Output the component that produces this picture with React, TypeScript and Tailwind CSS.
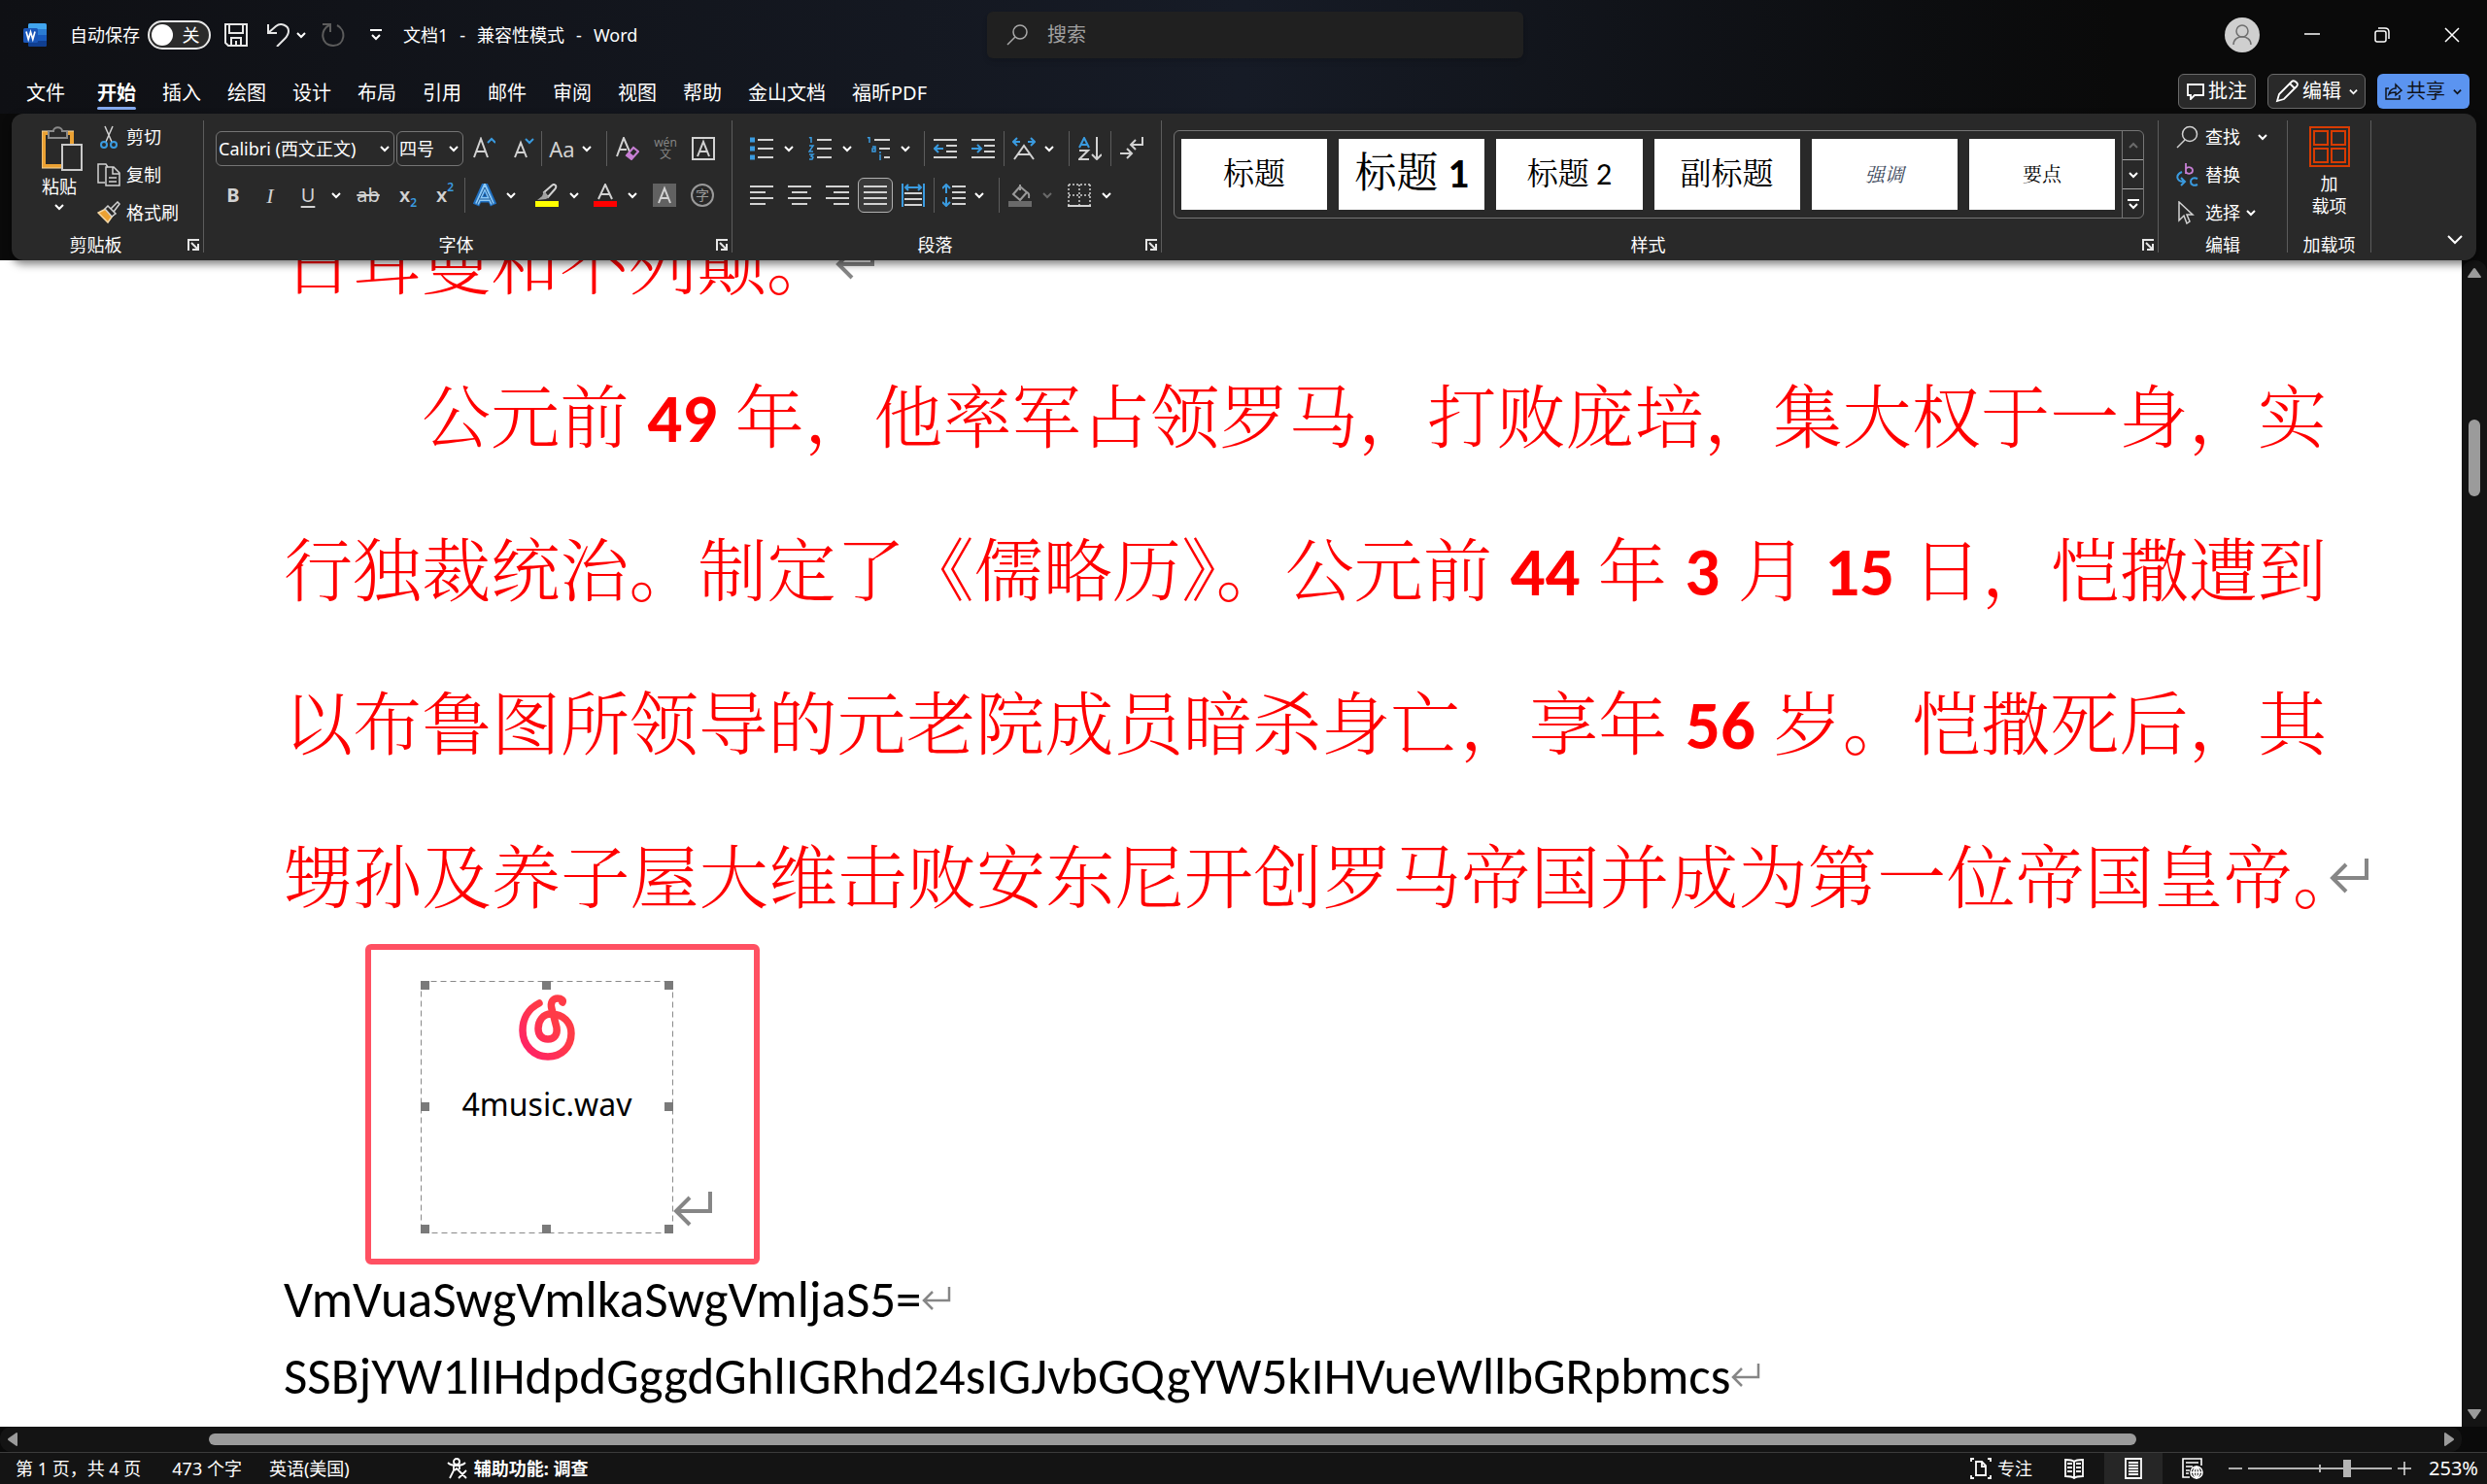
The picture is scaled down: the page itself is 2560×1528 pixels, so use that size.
import React from "react";

type Kids = { children?: React.ReactNode };

const UI = "font-['Noto_Sans','Noto_Sans_CJK_SC',sans-serif]";

function Chevron({ size = 10, className = "" }: { size?: number; className?: string }) {
  return (
    <svg width={size} height={size} viewBox="0 0 10 10" className={"shrink-0 " + className} fill="none" stroke="currentColor" strokeWidth="2">
      <path d="M1 3 L5 7 L9 3" />
    </svg>
  );
}

function Svg({ w = 24, h = 24, children }: Kids & { w?: number; h?: number }) {
  return (
    <svg width={w} height={h} viewBox={`0 0 ${w} ${h}`} fill="none" stroke="#d2d2d2" strokeWidth="2" className="shrink-0">
      {children}
    </svg>
  );
}

function Cell({ w, label, children }: Kids & { w: string; label: string }) {
  return (
    <button type="button" aria-label={label} className={"flex h-9 shrink-0 items-center justify-center " + w}>
      {children}
    </button>
  );
}

function Sep() {
  return <span className="h-9 w-px shrink-0 bg-[#5c5c5c]" />;
}

function Launcher() {
  return (
    <svg width="12" height="12" viewBox="0 0 12 12" fill="none" stroke="#e6e6e6" strokeWidth="2" className="shrink-0">
      <path d="M1 12 V1 H12" />
      <path d="M4 4 L10 10 M11 5 V11 H5" />
    </svg>
  );
}

function Group({ label, className = "", launcher = true, children }: Kids & { label: string; className?: string; launcher?: boolean }) {
  return (
    <section aria-label={label} className={"flex h-[136px] flex-col border-r border-[#5c5c5c] " + className}>
      <div className="h-[118px] shrink-0">{children}</div>
      <div className="flex h-5 shrink-0 items-center text-lg leading-5">
        <span className="flex-1 text-center">{label}</span>
        {launcher && (
          <button type="button" aria-label={label + "设置"} className="ml-2 mr-1">
            <Launcher />
          </button>
        )}
      </div>
    </section>
  );
}

function ReturnMark({ big = false }: { big?: boolean }) {
  return big ? (
    <svg width="40" height="36" viewBox="0 0 40 36" fill="none" stroke="#868686" strokeWidth="4" className="inline-block shrink-0">
      <path d="M38 0 V20 H3 M17 6 L3 20 L17 34" />
    </svg>
  ) : (
    <svg width="30" height="26" viewBox="0 0 30 26" fill="none" stroke="#868686" strokeWidth="2.500" className="-mt-1 inline-block shrink-0">
      <path d="M28 1 V15 H2 M11 6 L2 15 L11 24" />
    </svg>
  );
}

function WordLogo() {
  return (
    <svg width="24" height="24" viewBox="0 0 24 24" className="shrink-0">
      <rect x="5" y="0" width="19" height="24" rx="2" fill="#185abd" />
      <path d="M5 6 V2 Q5 0 7 0 H22 Q24 0 24 2 V6 Z" fill="#41a5ee" />
      <rect x="5" y="6" width="19" height="6" fill="#2b7cd3" />
      <path d="M5 18 H24 V22 Q24 24 22 24 H7 Q5 24 5 22 Z" fill="#103f91" />
      <rect x="0" y="5" width="15" height="15" rx="1.5" fill="#1a56b8" />
      <path d="M3 8.500 L5.200 16.500 L7.500 9 L9.800 16.500 L12 8.500" fill="none" stroke="#fff" strokeWidth="1.700" />
    </svg>
  );
}

function TitleBar() {
  return (
    <div className="flex h-[72px] items-center text-lg">
      <div className="flex flex-1 items-center pl-6">
        <WordLogo />
        <label className="ml-6 flex items-center">
          <span>自动保存</span>
          <input type="checkbox" className="sr-only" />
          <span className="ml-2 flex h-[30px] w-[65px] items-center rounded-full border-2 border-[#e8e8e8] bg-[#2b2b2b] pl-0.5">
            <span className="size-[22px] rounded-full bg-white" />
            <span className="flex-1 text-center leading-none">关</span>
          </span>
        </label>
        <button type="button" aria-label="保存" className="ml-3.5">
          <svg width="24" height="24" viewBox="0 0 24 24" fill="none" stroke="#e6e6e6" strokeWidth="2">
            <path d="M1 1 H23 V23 H4 L1 20 Z M5 1 V10 H19 V1 M7 23 V15 H17 V23 M12 18 V22" />
          </svg>
        </button>
        <button type="button" aria-label="撤消" className="ml-5">
          <svg width="24" height="24" viewBox="0 0 24 24" fill="none" stroke="#e6e6e6" strokeWidth="2">
            <path d="M1 1 V10 H10 M1.500 9.500 L9 3 C14 -1 22 2 22 8 C22 11 20 14 18 16 L10 24" />
          </svg>
        </button>
        <Chevron className="ml-1.5" />
        <button type="button" aria-label="恢复" className="ml-4" disabled>
          <svg width="24" height="24" viewBox="0 0 24 24" fill="none" stroke="#5c5c5c" strokeWidth="2">
            <path d="M1 1 H9 V9 M8 2 C-2 6 -1 23 12 23 C24 23 26 7 16 2" />
          </svg>
        </button>
        <button type="button" aria-label="自定义快速访问工具栏" className="ml-[26px]">
          <svg width="12" height="12" viewBox="0 0 12 12" fill="none" stroke="#fff" strokeWidth="2">
            <path d="M0 1 H12 M2 6 L6 10 L10 6" />
          </svg>
        </button>
        <h1 className="ml-[22px] flex gap-3">
          <span>文档1</span>
          <span>-</span>
          <span>兼容性模式</span>
          <span>-</span>
          <span>Word</span>
        </h1>
      </div>
      <label className="ml-7 flex h-12 w-[552px] items-center rounded-md bg-[#202020] pl-5 shadow-md">
        <svg width="22" height="22" viewBox="0 0 22 22" fill="none" stroke="#a8a8a8" strokeWidth="1.500">
          <circle cx="14" cy="8" r="7" />
          <path d="M9 13 L1 21" />
        </svg>
        <input type="search" aria-label="搜索" placeholder="搜索" className="ml-5 flex-1 bg-transparent text-xl outline-none placeholder:text-[#a0a0a0]" />
      </label>
      <div className="flex flex-1 items-center justify-end pr-7">
        <button type="button" aria-label="登录" className="mr-[46px] size-9 rounded-full bg-[#cfcfcf]">
          <svg width="36" height="36" viewBox="0 0 36 36" fill="none" stroke="#6f6f6f" strokeWidth="1.500">
            <circle cx="18" cy="14" r="6" />
            <path d="M9 28 C9 17 27 17 27 28" />
          </svg>
        </button>
        <button type="button" aria-label="最小化" className="mr-14">
          <svg width="16" height="16" viewBox="0 0 16 16" stroke="#fff" strokeWidth="1.500"><path d="M0 7 H16" /></svg>
        </button>
        <button type="button" aria-label="还原" className="mr-14">
          <svg width="16" height="16" viewBox="0 0 16 16" fill="none" stroke="#fff" strokeWidth="1.500">
            <rect x="1" y="4" width="11" height="11" rx="2" />
            <path d="M4 1 H11 Q15 1 15 5 V12" />
          </svg>
        </button>
        <button type="button" aria-label="关闭">
          <svg width="16" height="16" viewBox="0 0 16 16" stroke="#fff" strokeWidth="1.500"><path d="M1 1 L15 15 M15 1 L1 15" /></svg>
        </button>
      </div>
    </div>
  );
}

const TABS = ["文件", "开始", "插入", "绘图", "设计", "布局", "引用", "邮件", "审阅", "视图", "帮助", "金山文档", "福昕PDF"];

function TabBar() {
  return (
    <div className="flex h-[45px] items-start justify-between pr-[18px] text-xl">
      <nav className="flex gap-[27px] pl-[27px] pt-1.5">
        {TABS.map((t, i) => (
          <button key={t} type="button" className={i === 0 ? "mr-1.5 flex flex-col" : "flex flex-col"}>
            <span className={i === 1 ? "h-9 font-bold leading-9" : "h-9 leading-9"}>{t}</span>
            {i === 1 && <span className="-mt-1 h-[3px] w-full rounded bg-[#84a9ee]" />}
          </button>
        ))}
      </nav>
      <div className="flex pt-1">
        <button type="button" className="mr-3 flex h-9 w-20 items-center justify-center gap-1 rounded-md border border-[#6a6a6a] bg-[#292929]">
          <svg width="18" height="18" viewBox="0 0 18 18" fill="none" stroke="#fff" strokeWidth="1.800">
            <path d="M1 2 H17 V13 H8 L4 17 V13 H1 Z" />
          </svg>
          批注
        </button>
        <button type="button" className="mr-3 flex h-9 w-[101px] items-center justify-center gap-1 rounded-md border border-[#6a6a6a] bg-[#292929]">
          <svg width="24" height="24" viewBox="0 0 24 24" fill="none" stroke="#fff" strokeWidth="1.800">
            <path d="M2 22 L4 15 L17 2 Q19 0 22 3 Q24 5 22 7 L9 20 Z M15 4 L20 9" />
          </svg>
          编辑
          <Chevron size={9} className="ml-1" />
        </button>
        <button type="button" className="flex h-9 w-[95px] items-center justify-center gap-1 rounded-md bg-[#5b94f0] text-[#10131a]">
          <svg width="18" height="18" viewBox="0 0 18 18" fill="none" stroke="currentColor" strokeWidth="1.500">
            <path d="M4 6 H1 V17 H15 V13 M4 12 C5 8 8 6 11 6 V2 L17 8 L11 13 V10 C8 10 6 10 4 12 Z" />
          </svg>
          共享
          <Chevron size={9} className="ml-1" />
        </button>
      </div>
    </div>
  );
}

function ClipboardGroup() {
  return (
    <Group label="剪贴板" className="w-[198px]">
      <div className="flex pl-6">
        <button type="button" className="flex w-[50px] flex-col items-center pt-1.5 text-lg leading-6">
          <svg width="42" height="46" viewBox="0 0 42 46" fill="none" className="ml-1.5">
            <path d="M2 7 H31 V41 H2 Z" stroke="#eba133" strokeWidth="4" />
            <path d="M0 5 H33 M0 5 V43 H20" stroke="#f6d9a5" strokeWidth="1" />
            <path d="M7 12 V5 H12 C12 0 21 0 21 5 H26 V12 Z" fill="#292929" stroke="#8a8a8a" strokeWidth="2" />
            <rect x="21" y="19" width="20" height="26" fill="#292929" stroke="#c9c9c9" strokeWidth="2" />
          </svg>
          <span className="mt-1">粘贴</span>
          <Chevron className="mt-1" />
        </button>
        <div className="ml-3.5 flex flex-col text-lg">
          <button type="button" className="flex h-[39px] items-center gap-1.5 pb-1.5">
            <Svg>
              <path d="M8 1 L15 17 M16 1 L9 17" stroke="#d2d2d2" strokeWidth="1.500" />
              <circle cx="7" cy="20" r="3" stroke="#3a9be0" />
              <circle cx="17" cy="20" r="3" stroke="#3a9be0" />
            </Svg>
            剪切
          </button>
          <button type="button" className="flex h-[39px] items-center gap-1.5 pb-1.5">
            <Svg>
              <path d="M8 20 H1 V1 H9 L11 4" strokeWidth="1.500" />
              <path d="M9 4 H17 L23 10 V23 H9 Z M16 4 V11 H23 M12 15 H20 M12 19 H20" strokeWidth="1.500" />
            </Svg>
            复制
          </button>
          <button type="button" className="flex h-[39px] items-center gap-1.5 pb-1.5">
            <Svg>
              <path d="M9 8 L1 12 L11 22 L16 15 Z" fill="#eba133" stroke="#f6d9a5" strokeWidth="1.500" />
              <path d="M8 8 L11 5 L19 13 L15 16 Z" fill="#292929" strokeWidth="1.500" />
              <path d="M14 8 L21 1 L23 3 L17 11" strokeWidth="1.500" />
            </Svg>
            格式刷
          </button>
        </div>
      </div>
    </Group>
  );
}

function Combo({ w, label, value }: { w: string; label: string; value: string }) {
  return (
    <div className={"relative flex h-9 shrink-0 items-center rounded-md border border-[#757575] " + w}>
      <select aria-label={label} className="h-full w-full appearance-none bg-transparent pl-0.5 text-lg text-white outline-none">
        <option>{value}</option>
      </select>
      <Chevron className="pointer-events-none absolute right-1" />
    </div>
  );
}

function FontGroup() {
  return (
    <Group label="字体" className="w-[544px]">
      <div className="flex pl-3 pt-[11px]">
        <Combo w="w-[184px] mr-0.5" label="字体" value="Calibri (西文正文)" />
        <Combo w="w-[69px]" label="字号" value="四号" />
        <Cell w="w-[42px]" label="增大字号">
          <Svg>
            <path d="M2 21 L9 2 L16 21 M4 15 H14" />
            <path d="M16 6 L20 2 L24 6" stroke="#3a9be0" />
          </Svg>
        </Cell>
        <Cell w="w-[38px]" label="减小字号">
          <Svg>
            <path d="M4 21 L10 6 L16 21 M6 16 H14" />
            <path d="M15 2 L19 6 L23 2" stroke="#3a9be0" />
          </Svg>
        </Cell>
        <Sep />
        <Cell w="w-[41px]" label="更改大小写">
          <span className="text-[22px] text-[#d2d2d2]">Aa</span>
        </Cell>
        <Cell w="w-[10px] mr-[15px]" label="更改大小写选项"><Chevron /></Cell>
        <Sep />
        <Cell w="w-[42px]" label="清除所有格式">
          <Svg>
            <path d="M1 20 L8 1 L14 15 M3 13 H11" />
            <path d="M11 19 L18 11 L23 15 L16 23 Z" stroke="#c77fd4" />
            <path d="M11 19 L14 16 L19 20 L16 23 Z" fill="#c77fd4" stroke="none" />
          </Svg>
        </Cell>
        <Cell w="w-9" label="拼音指南">
          <span className="flex flex-col items-center text-xs leading-3 text-[#858585]">
            <span>wén</span>
            <span>文</span>
          </span>
        </Cell>
        <Cell w="w-[42px]" label="字符边框">
          <Svg>
            <rect x="1" y="1" width="22" height="22" />
            <path d="M6 20 L12 5 L18 20 M8 15 H16" />
          </Svg>
        </Cell>
      </div>
      <div className="flex pl-3 pt-3 text-[#d2d2d2]">
        <Cell w="w-9" label="加粗"><span className="text-xl font-bold">B</span></Cell>
        <Cell w="w-10" label="倾斜"><span className="font-['Liberation_Serif',serif] text-[22px] italic">I</span></Cell>
        <Cell w="w-[38px]" label="下划线"><span className="text-xl underline underline-offset-4">U</span></Cell>
        <Cell w="w-5" label="下划线选项"><Chevron className="text-white" /></Cell>
        <Cell w="w-[46px]" label="删除线"><span className="text-xl line-through">ab</span></Cell>
        <Cell w="w-9" label="下标">
          <span className="text-xl font-semibold">x</span><span className="mt-4 text-xs font-semibold text-[#3a9be0]">2</span>
        </Cell>
        <Cell w="w-10" label="上标">
          <span className="text-xl font-semibold">x</span><span className="mb-4 text-xs font-semibold text-[#3a9be0]">2</span>
        </Cell>
        <Sep />
        <Cell w="w-10" label="文本效果">
          <Svg>
            <path d="M3 22 L12 2 L21 22 M7 16 H17" stroke="#1f6fc0" strokeWidth="7" />
            <path d="M4 21 L12 3 L20 21 M7 16 H17" stroke="#8cc8f5" strokeWidth="4" />
            <path d="M4 21 L12 4 L20 21 M7 16 H17" stroke="#1f5a96" strokeWidth="1" />
          </Svg>
        </Cell>
        <Cell w="w-3.5 mr-3" label="文本效果选项"><Chevron className="text-white" /></Cell>
        <Cell w="w-9" label="突出显示">
          <Svg>
            <path d="M9 9 L17 2 Q19 0 21 2 Q22 4 20 6 L13 14 Z" />
            <path d="M9 8 L14 14 L11 16 L2 17 L7 13 Z" fill="#a0a0a0" stroke="none" />
            <rect x="0" y="18" width="24" height="6" fill="#ffff00" stroke="none" />
          </Svg>
        </Cell>
        <Cell w="w-5 mr-1" label="突出显示颜色"><Chevron className="text-white" /></Cell>
        <Cell w="w-9" label="字体颜色">
          <Svg>
            <path d="M5 16 L12 1 L19 16 M7 11 H17" />
            <rect x="0" y="18" width="24" height="6" fill="#ff0000" stroke="none" />
          </Svg>
        </Cell>
        <Cell w="w-5" label="字体颜色选项"><Chevron className="text-white" /></Cell>
        <Cell w="w-[46px]" label="字符底纹">
          <Svg>
            <rect x="0" y="0" width="24" height="24" fill="#616161" stroke="none" />
            <path d="M6 20 L12 5 L18 20 M8 15 H16" />
          </Svg>
        </Cell>
        <Cell w="w-8" label="带圈字符">
          <span className="flex size-6 items-center justify-center rounded-full border-2 border-[#9a9a9a] text-sm leading-none text-[#9a9a9a]">字</span>
        </Cell>
      </div>
    </Group>
  );
}

function Lines({ d }: { d: string }) {
  return <Svg><path d={d} /></Svg>;
}

function ParagraphGroup() {
  return (
    <Group label="段落" className="w-[442px]">
      <div className="flex pl-2.5 pt-[11px]">
        <Cell w="w-10" label="项目符号">
          <Svg>
            <path d="M8 3 H24 M8 12 H24 M8 21 H24" />
            <path d="M0 3 H5 M0 12 H5 M0 21 H5" stroke="#3a9be0" strokeWidth="5" />
          </Svg>
        </Cell>
        <Cell w="w-4 mr-1" label="项目符号选项"><Chevron /></Cell>
        <Cell w="w-10" label="编号">
          <Svg>
            <path d="M9 3 H24 M9 12 H24 M9 21 H24" />
            <path d="M1 1 L3 0 V6 M1 9 H5 L1 15 H5 M1 18 H5 L3 20 L5 21 L4 23 H1" stroke="#3a9be0" strokeWidth="1.500" />
          </Svg>
        </Cell>
        <Cell w="w-4 mr-1" label="编号选项"><Chevron /></Cell>
        <Cell w="w-10" label="多级列表">
          <Svg>
            <path d="M8 3 H24 M13 12 H24 M18 21 H24" />
            <path d="M1 1 L3 0 V6 M6 10 H9 V15 H6 V12 H9 M14 18 V24 M14 15 V17" stroke="#3a9be0" strokeWidth="1.500" />
          </Svg>
        </Cell>
        <Cell w="w-4 mr-[11px]" label="多级列表选项"><Chevron /></Cell>
        <Sep />
        <Cell w="w-[42px]" label="减少缩进量">
          <Svg>
            <path d="M0 3 H24 M13 9 H24 M13 15 H24 M0 21 H24" />
            <path d="M10 12 H2 M5 8 L1 12 L5 16" stroke="#3a9be0" />
          </Svg>
        </Cell>
        <Cell w="w-9 mr-[3px]" label="增加缩进量">
          <Svg>
            <path d="M0 3 H24 M13 9 H24 M13 15 H24 M0 21 H24" />
            <path d="M0 12 H9 M6 8 L10 12 L6 16" stroke="#3a9be0" />
          </Svg>
        </Cell>
        <Sep />
        <Cell w="w-10" label="中文版式">
          <Svg>
            <path d="M2 23 L12 9 L22 23 M6 18 H18" />
            <path d="M8 5 H1 M5 1 L1 5 L5 9 M16 5 H23 M19 1 L23 5 L19 9" stroke="#3a9be0" />
          </Svg>
        </Cell>
        <Cell w="w-3 mr-3.5" label="中文版式选项"><Chevron /></Cell>
        <Sep />
        <Cell w="w-[42px]" label="排序">
          <Svg>
            <path d="M1 11 L6 1 L11 11 M3 8 H9" stroke="#3a9be0" />
            <path d="M1 14 H10 L1 23 H11 M19 0 V23 M14 18 L19 23 L24 18" />
          </Svg>
        </Cell>
        <Sep />
        <Cell w="w-[42px]" label="显示编辑标记">
          <Lines d="M23 0 V8 H12 M16 3 L11 8 L16 13 M0 17 H11 M7 12 L12 17 L7 22" />
        </Cell>
      </div>
      <div className="flex pl-2.5 pt-3">
        <Cell w="w-10" label="左对齐"><Lines d="M0 3 H24 M0 9 H16 M0 15 H24 M0 21 H16" /></Cell>
        <Cell w="w-[38px]" label="居中"><Lines d="M0 3 H24 M4 9 H20 M0 15 H24 M4 21 H20" /></Cell>
        <Cell w="w-10" label="右对齐"><Lines d="M0 3 H24 M8 9 H24 M0 15 H24 M8 21 H24" /></Cell>
        <Cell w="w-9 rounded-md border border-[#b0b0b0] bg-[#3a3a3a] ml-px" label="两端对齐"><Lines d="M0 3 H24 M0 9 H24 M0 15 H24 M0 21 H24" /></Cell>
        <Cell w="w-[42px]" label="分散对齐">
          <Svg>
            <path d="M3 10 H21 M3 16 H21 M3 22 H21" />
            <path d="M1 0 V24 M23 0 V24 M4 4 H20 M7 1 L4 4 L7 7 M17 1 L20 4 L17 7" stroke="#3a9be0" />
          </Svg>
        </Cell>
        <Sep />
        <Cell w="w-10" label="行距">
          <Svg>
            <path d="M10 3 H24 M10 9 H24 M10 15 H24 M10 21 H24" />
            <path d="M4 1 V10 M0 5 L4 1 L8 5 M4 14 V23 M0 19 L4 23 L8 19" stroke="#3a9be0" />
          </Svg>
        </Cell>
        <Cell w="w-3 mr-3.5" label="行距选项"><Chevron /></Cell>
        <Sep />
        <Cell w="w-[42px]" label="底纹">
          <Svg>
            <path d="M12 1 V7 M12 3 L19 9 L12 17 L5 11 Z M19 9 Q22 10 21 15" stroke="#9a9a9a" />
            <rect x="0" y="18" width="24" height="6" fill="#6a6a6a" stroke="none" />
          </Svg>
        </Cell>
        <Cell w="w-3.5 mr-1.5" label="底纹选项"><Chevron className="text-[#6a6a6a]" /></Cell>
        <Cell w="w-10" label="边框">
          <Svg>
            <path d="M1 1 H23 M1 1 V22 M23 1 V22 M12 1 V22 M1 12 H23" strokeDasharray="2 2" strokeWidth="1.500" />
            <path d="M0 23 H24" />
          </Svg>
        </Cell>
        <Cell w="w-4" label="边框选项"><Chevron /></Cell>
      </div>
    </Group>
  );
}

const STYLES = [
  { name: "标题", cls: "text-[32px]" },
  { name: "标题 1", cls: "text-[43px]" },
  { name: "标题 2", cls: "text-[32px]" },
  { name: "副标题", cls: "text-[32px]" },
  { name: "强调", cls: "text-xl italic text-[#404a5c]" },
  { name: "要点", cls: "text-xl" },
];

function StylesGroup() {
  return (
    <Group label="样式" className="min-w-0 flex-1">
      <div className="pl-3 pr-3.5 pt-2.5">
        <div className="flex h-[91px] rounded-md border border-[#757575]">
          <div className="flex flex-1 gap-3 py-2 pl-[7px] pr-[7px]">
            {STYLES.map((s) => (
              <button key={s.name} type="button" className="flex h-[73px] min-w-0 flex-1 items-center justify-center overflow-hidden whitespace-nowrap bg-white font-['Carlito','SimSun','Noto_Serif_CJK_SC','Noto_Sans_CJK_SC',sans-serif] text-black">
                <span className={s.cls}>
                  {s.name === "标题 1" ? <>标题 <b className="font-black">1</b></> : s.name}
                </span>
              </button>
            ))}
          </div>
          <div className="flex w-[22px] flex-col divide-y divide-[#a8a8a8] border-l border-[#757575]">
            <button type="button" aria-label="上一行" className="flex flex-1 items-center justify-center text-[#6a6a6a]"><Chevron className="rotate-180" /></button>
            <button type="button" aria-label="下一行" className="flex flex-1 items-center justify-center"><Chevron /></button>
            <button type="button" aria-label="其他样式" className="flex flex-1 items-center justify-center">
              <svg width="12" height="12" viewBox="0 0 12 12" fill="none" stroke="#fff" strokeWidth="2"><path d="M0 2 H12 M2 6 L6 10 L10 6" /></svg>
            </button>
          </div>
        </div>
      </div>
    </Group>
  );
}

function EditGroup() {
  const row = "flex h-[39px] items-center gap-1.5 pb-1.5";
  return (
    <Group label="编辑" className="w-[133px]" launcher={false}>
      <div className="flex flex-col pl-[18px] text-lg">
        <button type="button" className={row}>
          <Svg><circle cx="14" cy="9" r="7.500" strokeWidth="1.500" /><path d="M9 15 L1 23" strokeWidth="1.500" /></Svg>
          查找
          <Chevron className="ml-3" />
        </button>
        <button type="button" className={row}>
          <Svg>
            <path d="M10 0 V11 M10 6 C12 3 17 4 17 7.500 C17 11 12 12 10 9" stroke="#c77fd4" strokeWidth="1.800" />
            <path d="M6 9 C-1 12 0 19 8 19 M5 15 L9 19 L5 23" stroke="#3a9be0" />
            <path d="M22 16 C18 14 15 16 15 19 C15 22 18 24 22 22" stroke="#3a9be0" />
          </Svg>
          替换
        </button>
        <button type="button" className={row}>
          <Svg><path d="M3 1 V20 L8 15 L11 23 L14 21 L11 14 H17 Z" strokeWidth="1.500" /></Svg>
          选择
          <Chevron />
        </button>
      </div>
    </Group>
  );
}

function AddinGroup() {
  return (
    <Group label="加载项" className="w-[86px]" launcher={false}>
      <button type="button" className="flex w-full flex-col items-center pt-1.5 text-lg leading-[23px]">
        <svg width="42" height="42" viewBox="0 0 42 42" fill="none" stroke="#d83b01" strokeWidth="2">
          <rect x="1" y="1" width="40" height="40" />
          <path d="M5 5 H19 V19 H5 Z M23 5 H37 V19 H23 Z M5 23 H19 V37 H5 Z M23 23 H37 V37 H23 Z" />
        </svg>
        <span className="mt-1.5">加</span>
        <span>载项</span>
      </button>
    </Group>
  );
}

function Ribbon() {
  return (
    <div className="relative z-10 ml-3 mr-[11px] flex h-[151px] items-start rounded-xl bg-[#292929] pt-[7px] shadow-[0_4px_8px_rgba(0,0,0,0.5)]">
      <ClipboardGroup />
      <FontGroup />
      <ParagraphGroup />
      <StylesGroup />
      <EditGroup />
      <AddinGroup />
      <div className="flex h-[136px] w-[108px] items-end justify-end pb-2 pr-3.5">
        <button type="button" aria-label="折叠功能区">
          <svg width="16" height="10" viewBox="0 0 16 10" fill="none" stroke="#fff" strokeWidth="2"><path d="M1 1 L8 8 L15 1" /></svg>
        </button>
      </div>
    </div>
  );
}

function Digits({ children }: Kids) {
  return <b className="font-['Carlito','Lato',sans-serif] font-bold leading-none">{children}</b>;
}

function Justified({ children, indent = false }: Kids & { indent?: boolean }) {
  return (
    <span className={indent ? "block h-[158px] whitespace-nowrap pl-[142px] [text-align-last:justify]" : "block h-[158px] whitespace-nowrap [text-align-last:justify]"}>
      {children}
    </span>
  );
}

const HANDLES = [
  "left-0 top-0", "left-[125px] top-0", "right-0 top-0",
  "left-0 top-[125px]", "right-0 top-[125px]",
  "bottom-0 left-0", "bottom-0 left-[125px]", "bottom-0 right-0",
];

function EmbeddedObject() {
  return (
    <div className="relative mt-1.5 flex h-[316px] items-start pl-[141px] pt-[27px]">
      <figure className="relative flex size-[260px] flex-col items-center pt-3.5">
        <svg width="260" height="260" viewBox="0 0 260 260" fill="none" className="absolute left-0 top-0" stroke="#8a8a8a">
          <rect x="0.500" y="0.500" width="259" height="259" strokeDasharray="6 4" />
        </svg>
        {HANDLES.map((h) => (
          <span key={h} className={"absolute size-[9px] bg-[#7a7a7a] " + h} />
        ))}
        <svg width="58" height="68" viewBox="0 0 58 68" fill="none">
          <defs>
            <linearGradient id="disc" x1="0" y1="1" x2="0.600" y2="0.400">
              <stop offset="0" stopColor="#ff1f6b" />
              <stop offset="1" stopColor="#ff3b47" />
            </linearGradient>
          </defs>
          <path
            d="M21 9 C9 15 4 26 4 37 C4 53 16 64 30 64 C44 64 54 54 54 40 C54 29 46 20 33 20 C25 20 20 27 20 35 C20 42 24 46 30 46 C37 46 40 41 39 34 L34 15 C32 8 35 4 40 4 C44 4 46 6 45 8"
            stroke="url(#disc)" strokeWidth="7.500" strokeLinecap="round"
          />
        </svg>
        <figcaption className="mt-5 font-['Noto_Sans',sans-serif] text-[32px] leading-[50px]">4music.wav</figcaption>
      </figure>
      <span className="mt-[217px] flex"><ReturnMark big /></span>
      <div className="absolute -top-[11px] left-[84px] h-[330px] w-[406px] rounded-md border-[6px] border-[#ff5062]" />
    </div>
  );
}

function Document() {
  return (
    <main className="h-full min-w-0 flex-1 overflow-hidden bg-white pl-[292px] pr-[139px] text-black">
      <article className="-mt-[81px]">
        <div lang="zh-CN" className="font-['SimSun','Noto_Serif_CJK_SC','Noto_Sans_CJK_SC',serif] text-[71px] font-light leading-[158px] text-[#ff0000]">
          <p className="flex h-[158px] items-center whitespace-nowrap">
            日耳曼和不列颠。
            <span className="flex pt-2"><ReturnMark big /></span>
          </p>
          <p>
            <Justified indent>公元前 <Digits>49</Digits> 年，他率军占领罗马，打败庞培，集大权于一身，实</Justified>
            <Justified>行独裁统治。制定了《儒略历》。公元前 <Digits>44</Digits> 年 <Digits>3</Digits> 月 <Digits>15</Digits> 日，恺撒遭到</Justified>
            <Justified>以布鲁图所领导的元老院成员暗杀身亡，享年 <Digits>56</Digits> 岁。恺撒死后，其</Justified>
            <span className="-mr-[43px] flex h-[158px] items-center whitespace-nowrap">
              <span className="flex-1 [text-align-last:justify]">甥孙及养子屋大维击败安东尼开创罗马帝国并成为第一位帝国皇帝。</span>
              <span className="-ml-[33px] flex pt-2"><ReturnMark big /></span>
            </span>
          </p>
        </div>
        <EmbeddedObject />
        <div className="font-['Carlito','Lato',sans-serif] text-[53px] leading-[79px]">
          <p className="flex items-center whitespace-nowrap">VmVuaSwgVmlkaSwgVmljaS5=<ReturnMark /></p>
          <p className="flex items-center whitespace-nowrap">SSBjYW1lIHdpdGggdGhlIGRhd24sIGJvbGQgYW5kIHVueWllbGRpbmcs<ReturnMark /></p>
        </div>
      </article>
    </main>
  );
}

function Arrow({ dir }: { dir: string }) {
  return (
    <svg width="14" height="10" viewBox="0 0 14 10" fill="#9b9b9b" className={dir}>
      <path d="M6 0.500 Q7 -0.500 8 0.500 L14 9 Q14 10 13 10 H1 Q0 10 0 9 Z" />
    </svg>
  );
}

function StatusBar() {
  return (
    <footer className="flex h-[33px] shrink-0 items-center border-t border-[#3c3c3c] bg-[#141414] text-lg leading-8">
      <button type="button" className="ml-4">第 1 页，共 4 页</button>
      <button type="button" className="ml-8">473 个字</button>
      <button type="button" className="ml-7">英语(美国)</button>
      <button type="button" className="ml-[100px] flex items-center gap-1.5 font-bold">
        <svg width="22" height="22" viewBox="0 0 22 22" fill="none" stroke="#fff" strokeWidth="1.800">
          <circle cx="10" cy="4" r="3" />
          <path d="M1 5 C5 9 15 9 19 5 M7 8 V13 L3 21 M13 8 V12 M8 13 L10 11 L12 13 M12 13 L20 21 M20 13 L12 21" />
        </svg>
        辅助功能: 调查
      </button>
      <div className="ml-auto flex h-8 items-center pr-2.5">
        <button type="button" className="flex items-center gap-1.5">
          <svg width="22" height="22" viewBox="0 0 22 22" fill="none" stroke="#fff" strokeWidth="1.800">
            <path d="M4 1 H1 V4 M18 1 H21 V4 M4 21 H1 V18 M18 21 H21 V18 M6 4 H12 L16 8 V18 H6 Z M12 4 V9 H16" />
          </svg>
          专注
        </button>
        <button type="button" aria-label="阅读视图" className="ml-8">
          <svg width="22" height="22" viewBox="0 0 22 22" fill="none" stroke="#fff" strokeWidth="1.800">
            <path d="M11 4 C9 2 5 2 2 2 V19 C5 19 9 19 11 21 C13 19 17 19 20 19 V2 C17 2 13 2 11 4 V21 M4 6 H9 M4 10 H9 M4 14 H9 M13 6 H18 M13 10 H18 M13 14 H18" />
          </svg>
        </button>
        <button type="button" aria-label="页面视图" className="ml-5 flex h-8 w-[60px] items-center justify-center bg-[#262626]">
          <svg width="18" height="22" viewBox="0 0 18 22" fill="none" stroke="#fff" strokeWidth="1.800">
            <path d="M1 1 H17 V21 H1 Z M4 5 H14 M4 8 H14 M4 11 H14 M4 14 H14 M4 17 H14" />
          </svg>
        </button>
        <button type="button" aria-label="Web 版式视图" className="ml-5">
          <svg width="22" height="22" viewBox="0 0 22 22" fill="none" stroke="#fff" strokeWidth="1.600">
            <path d="M8 20 H1 V1 H20 V8 M4 5 H17 M4 9 H11 M4 13 H8 M4 16 H7" />
            <circle cx="15" cy="15" r="6" />
            <path d="M9 15 H21 M15 9 V21 M15 9 C11 12 11 18 15 21 C19 18 19 12 15 9" />
          </svg>
        </button>
        <button type="button" aria-label="缩小" className="ml-[26px]">
          <svg width="14" height="14" viewBox="0 0 14 14" stroke="#e0e0e0" strokeWidth="1.500"><path d="M0 7 H14" /></svg>
        </button>
        <label className="relative ml-1.5 flex h-8 w-[148px] items-center">
          <span className="absolute left-[73px] top-3 h-2 w-0.5 bg-[#b4b4b4]" />
          <input
            type="range" aria-label="缩放级别" min={0} max={100} defaultValue={70}
            className="relative h-0.5 w-full appearance-none bg-[#b4b4b4] [&::-webkit-slider-thumb]:h-[18px] [&::-webkit-slider-thumb]:w-2 [&::-webkit-slider-thumb]:appearance-none [&::-webkit-slider-thumb]:bg-[#b4b4b4]"
          />
        </label>
        <button type="button" aria-label="放大" className="ml-1.5">
          <svg width="14" height="14" viewBox="0 0 14 14" stroke="#e0e0e0" strokeWidth="1.500"><path d="M0 7 H14 M7 0 V14" /></svg>
        </button>
        <button type="button" className="ml-[18px] w-[50px] text-right text-xl">253%</button>
      </div>
    </footer>
  );
}

export default function App() {
  return (
    <div className={"flex h-screen flex-col overflow-hidden bg-[#0a0a0a] text-white " + UI}>
      <header className="relative z-10 shrink-0 bg-linear-to-r from-[#0f1014] via-[#161b26] via-50% to-[#0a0a0a] to-85%">
        <TitleBar />
        <TabBar />
      </header>
      <Ribbon />
      <div className="flex min-h-0 flex-1">
        <Document />
        <div className="flex w-[26px] shrink-0 flex-col items-center rounded-t-xl bg-[#141414] pb-2 pt-2">
          <Arrow dir="" />
          <div className="mt-[146px] h-[79px] w-3 rounded-full bg-[#9b9b9b]" />
          <Arrow dir="mt-auto rotate-180" />
        </div>
      </div>
      <div className="mr-[26px] flex h-[26px] shrink-0 items-center rounded-xl bg-[#141414] pl-1.5 pr-1.5">
        <Arrow dir="-rotate-90" />
        <div className="ml-[195px] mr-[315px] h-3 flex-1 rounded-full bg-[#9b9b9b]" />
        <Arrow dir="rotate-90" />
      </div>
      <StatusBar />
    </div>
  );
}
